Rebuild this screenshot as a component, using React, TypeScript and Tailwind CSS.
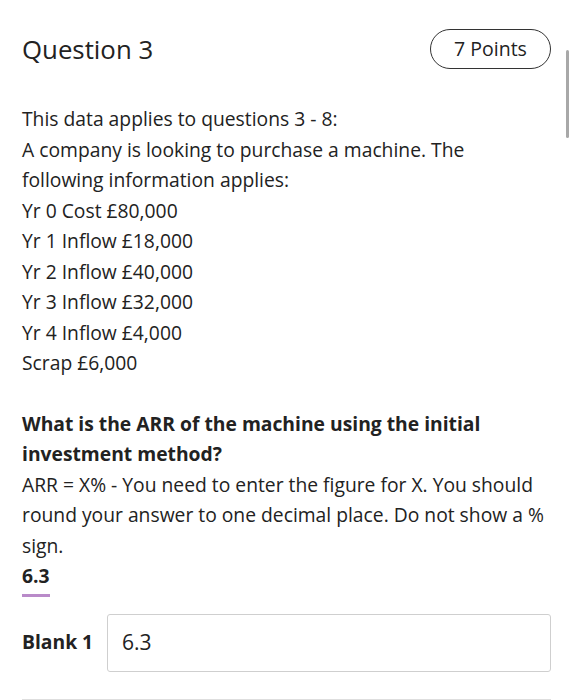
import React from "react";

export default function App() {
  return (
    <div className="relative w-[574px] h-[700px] bg-white overflow-hidden text-[#222]" style={{ fontFamily: '"Open Sans", "Noto Sans", sans-serif' }}>
      <div className="absolute right-[5px] top-[50px] w-[3px] h-[88px] rounded-full bg-[#a8a8a8]" />
      <div className="pl-[22px] pr-[23px]">
        <div className="flex items-center justify-between pt-[29px] h-[69px]">
          <h1 className="text-[25.8px] leading-[32px]">Question 3</h1>
          <div className="flex items-center justify-center w-[121px] h-[40px] rounded-full border-[1.5px] border-[#333] text-[19.5px]">7 Points</div>
        </div>
        <div className="mt-[35px] w-[524px] text-[19.3px] leading-[30.5px]">
          <p>This data applies to questions 3 - 8:</p>
          <p>A company is looking to purchase a machine. The following information applies:</p>
          <p>Yr 0 Cost £80,000</p>
          <p>Yr 1 Inflow £18,000</p>
          <p>Yr 2 Inflow £40,000</p>
          <p>Yr 3 Inflow £32,000</p>
          <p>Yr 4 Inflow £4,000</p>
          <p>Scrap £6,000</p>
        </div>
        <div className="mt-[30px] w-[524px] text-[19.3px] leading-[30.5px]">
          <p className="font-bold">What is the ARR of the machine using the initial investment method?</p>
          <p>ARR = X% - You need to enter the figure for X. You should round your answer to one decimal place. Do not show a % sign.</p>
          <p className="font-bold">
            <span className="inline-block relative">6.3<span className="absolute left-0 right-0 bottom-[-5px] h-[3px] bg-[#b98ac9]" /></span>
          </p>
        </div>
        <div className="mt-[22px] flex items-center">
          <span className="font-bold text-[19.3px] w-[85px]">Blank 1</span>
          <div className="flex-1 h-[58px] border border-[#cfcfcf] rounded-[3px] flex items-center px-[14px] text-[21px]">6.3</div>
        </div>
        <div className="mt-[27px] border-t border-[#dedede]" />
      </div>
    </div>
  );
}
